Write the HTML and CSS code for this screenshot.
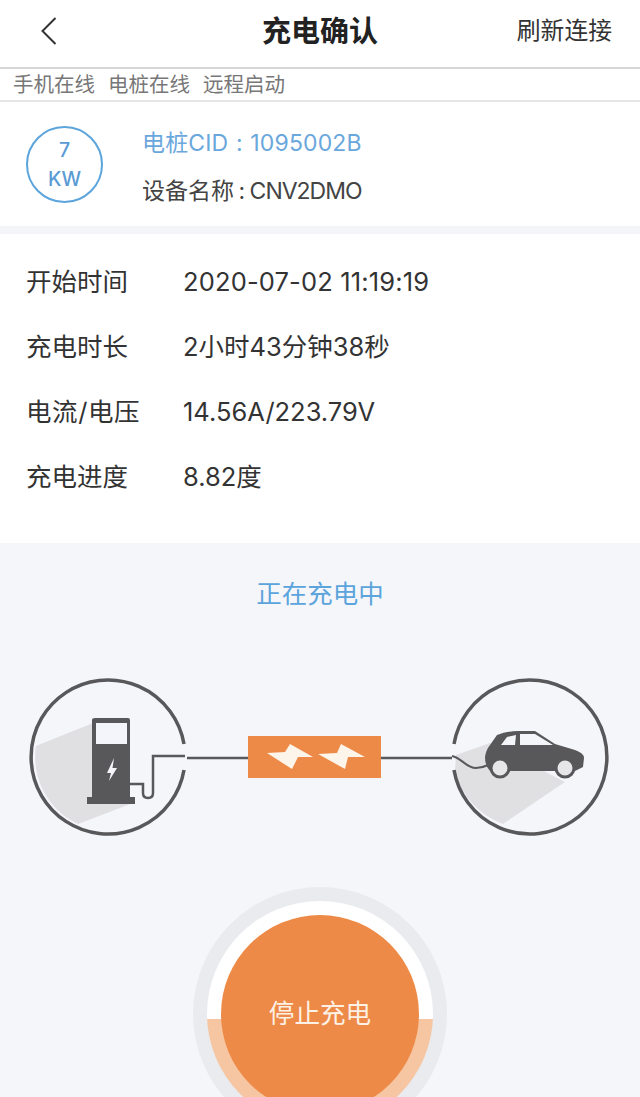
FILE: index.html
```html
<!DOCTYPE html>
<html lang="zh">
  <head>
    <meta charset="UTF-8" />
    <title>充电确认</title>
    <link rel="stylesheet" href="styles.css">
  </head>
  <body>
    <header class="topbar">
      <svg class="back" width="18" height="30" viewBox="0 0 18 30">
        <path d="M15.500 2 L2.500 15 L15.500 28" fill="none" stroke="#333" stroke-width="2" />
      </svg>
      <h1 class="title">充电确认</h1>
      <span class="refresh">刷新连接</span>
    </header>

    <div class="status">
      <span>手机在线</span>
      <span>电桩在线</span>
      <span>远程启动</span>
    </div>

    <section class="pile">
      <div class="power">
        <span>7</span>
        <span>KW</span>
      </div>
      <div class="pile-info">
        <div class="cid">电桩CID : 1095002B</div>
        <div class="device">设备名称 : <span class="device-name">CNV2DMO</span></div>
      </div>
    </section>

    <section class="details">
      <div class="row"><span class="key">开始时间</span><span class="value">2020-07-02 11:19:19</span></div>
      <div class="row"><span class="key">充电时长</span><span>2小时43分钟38秒</span></div>
      <div class="row"><span class="key key-wide">电流/电压</span><span>14.56A/223.79V</span></div>
      <div class="row"><span class="key">充电进度</span><span>8.82度</span></div>
    </section>

    <section class="charging">
      <div class="state">正在充电中</div>

      <svg class="diagram" width="640" height="170" viewBox="0 670 640 170">
        <!-- pump side -->
        <path d="M93 723 L36 746 A74 74 0 0 0 78 824 L133 803 Z" fill="#e0e0e3" />
        <path d="M184 744 A77 77 0 1 0 184 770" fill="none" stroke="#58585a" stroke-width="3.500" />
        <path d="M95 718 H128 Q130 718 130 720 V797 H135 V804 H87 V797 H92 V720 Q92 718 95 718 Z" fill="#58585a" />
        <rect x="96" y="723" width="31" height="21" fill="#f4f5fa" />
        <path d="M114 758 L107 773 H111 L109 781 L117 768 H112.500 Z" fill="#f4f5fa" />
        <path d="M130 784 H143 V793 Q143 798 148 798 Q153 798 153 793 V756 H185" fill="none" stroke="#58585a" stroke-width="2.500" />

        <!-- link -->
        <path d="M187 758 H248 M381 758 H452" stroke="#58585a" stroke-width="2.500" />
        <rect x="248" y="736" width="133" height="42" fill="#ee8a47" />
        <path d="M267 753 L285 752 L290 744 L313 757 L298 757 L292 769 Z" fill="#fdf4ea" />
        <path d="M318 754 L337 753 L341 744 L365 757 L348 757 L345 769 Z" fill="#fdf4ea" />

        <!-- car side -->
        <path d="M456 755 L490 743 L565 782 L503 824 A77 77 0 0 1 455 772 Z" fill="#e0e0e3" />
        <path d="M454 744 A77 77 0 1 1 454 770" fill="none" stroke="#58585a" stroke-width="3.500" />
        <path d="M452 756 C462 758 466 768 476 768 Q482 768 488 765" fill="none" stroke="#58585a" stroke-width="2" />
        <path d="M485 757 Q486 750 490 745 L497 735 Q508 731 518 731 H535 L555 744 L575 750 Q584 753 584 758 L583 767 L575 771 H490 Q485 766 485 757 Z" fill="#58585a" />
        <path d="M501 745 L507 737 L516 735 L515 745 Z" fill="#f4f5fa" />
        <path d="M520 734 H535 L553 745 H520 Z" fill="#f4f5fa" />
        <circle cx="500" cy="768" r="9" fill="#e6e6e8" stroke="#58585a" stroke-width="3" />
        <circle cx="565" cy="768" r="9" fill="#e6e6e8" stroke="#58585a" stroke-width="3" />
      </svg>

      <div class="stop-outer">
        <div class="stop-ring">
          <button class="stop">停止充电</button>
        </div>
      </div>
    </section>
  </body>
</html>
```

FILE: styles.css
```css
html,
body {
  height: 1097px;
  overflow: hidden;
}

body {
  margin: 0;
  background: #fff;
  color: #333;
  font-family: Inter, "Noto Sans CJK SC", sans-serif;
}

.topbar {
  height: 69px;
  display: flex;
  align-items: center;
  justify-content: space-between;
  padding: 0 28px 10px 40px;
  box-sizing: border-box;
  position: relative;
  border-bottom: 2px solid #d6d6d6;
}

.back {
  display: block;
  margin-top: 4px;
}

.title {
  position: absolute;
  left: 0;
  right: 0;
  margin: 0;
  text-align: center;
  font-size: 29px;
  font-weight: 700;
  color: #222;
  pointer-events: none;
}

.refresh {
  font-size: 23.800px;
  color: #333;
}

.status {
  height: 33px;
  display: flex;
  align-items: center;
  gap: 13px;
  padding: 0 0 4px 13px;
  box-sizing: border-box;
  font-size: 20.500px;
  color: #777;
  border-bottom: 2px solid #e6e6e6;
}

.pile {
  height: 124px;
  display: flex;
  align-items: center;
  padding-left: 26px;
}

.power {
  width: 73px;
  height: 73px;
  border: 2px solid #5ba4dc;
  border-radius: 50%;
  display: flex;
  flex-direction: column;
  align-items: center;
  justify-content: center;
  gap: 5px;
  color: #5b9bd5;
  font-size: 19.500px;
  font-weight: 500;
  line-height: 24px;
}

.pile-info {
  margin: 6px 0 0 39px;
  display: flex;
  flex-direction: column;
  gap: 20px;
  font-size: 23px;
  line-height: 28px;
}

.cid {
  color: #6aa7dc;
  word-spacing: 1px;
  letter-spacing: 0.150px;
}

.device {
  color: #444;
  word-spacing: -2px;
}

.device-name {
  letter-spacing: -1px;
}

.details {
  border-top: 8px solid #f4f5f9;
  height: 317px;
  padding-left: 26px;
  padding-top: 15px;
  box-sizing: border-box;
}

.row {
  height: 65px;
  display: flex;
  align-items: baseline;
  font-size: 25.500px;
  line-height: 65px;
  color: #333;
}

.key {
  width: 157px;
}

.key-wide {
  letter-spacing: 0.600px;
}

.value {
  letter-spacing: 0.150px;
}

.charging {
  height: 554px;
  background: #f5f6fa;
  overflow: hidden;
}

.state {
  padding-top: 32px;
  text-align: center;
  font-size: 25.500px;
  line-height: 38px;
  color: #5ba4dc;
}

.diagram {
  display: block;
  margin-top: 57px;
}

.stop-outer {
  width: 254px;
  height: 254px;
  margin: 47px auto 0;
  padding: 14px;
  box-sizing: border-box;
  border-radius: 50%;
  background: #e9ebee;
}

.stop-ring {
  height: 100%;
  padding: 14px;
  box-sizing: border-box;
  border-radius: 50%;
  background: linear-gradient(#fff 118px, #f6c6a2 118px);
}

.stop {
  display: block;
  width: 100%;
  height: 100%;
  padding: 0 0 6px;
  border: 0;
  border-radius: 50%;
  background: #ee8a47;
  color: #fdf1e6;
  font-family: inherit;
  font-size: 25.600px;
}
```
